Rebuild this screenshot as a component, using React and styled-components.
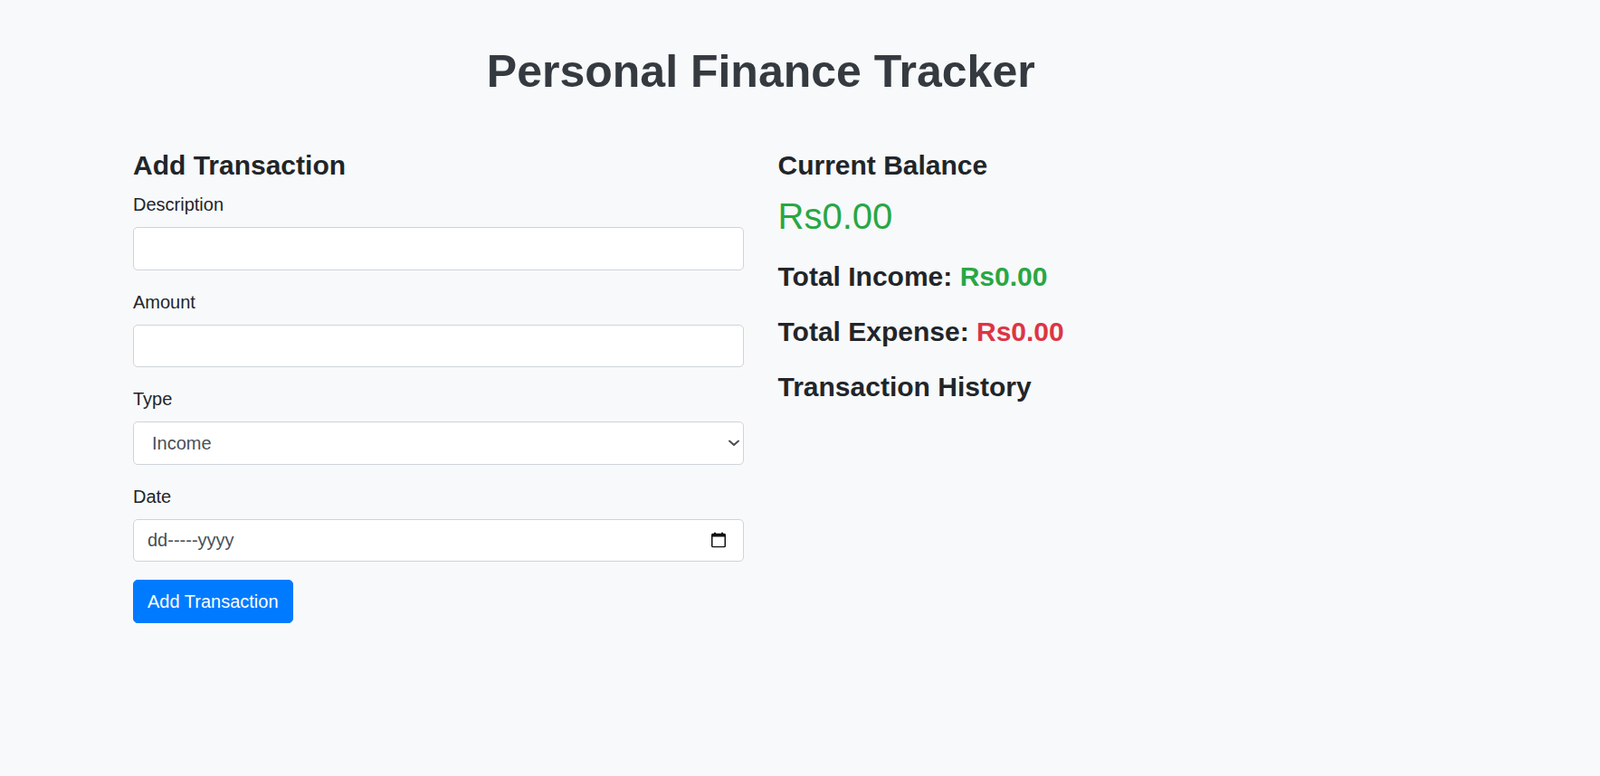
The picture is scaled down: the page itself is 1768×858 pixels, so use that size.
import React from "react";
import styled, { createGlobalStyle } from "styled-components";

const GlobalStyle = createGlobalStyle`
  *, *::before, *::after { box-sizing: border-box; }
  html, body { margin: 0; padding: 0; }
  body {
    background: #f8f9fa;
    color: #212529;
    font-family: "Liberation Sans", Arial, sans-serif;
    font-size: 20px;
    line-height: 1.5;
  }
`;

const Page = styled.div`
  padding: 49px 0 60px;
  min-height: 858px;
`;

const Container = styled.div`
  width: 1387.5px;
  margin-left: 147px;
`;

const Title = styled.h1`
  margin: 0 0 56px;
  font-size: 50px;
  line-height: 60px;
  font-weight: 700;
  text-align: center;
  color: #343a40;
`;

const Columns = styled.div`
  display: grid;
  grid-template-columns: 1fr 1fr;
  column-gap: 37.5px;
  align-items: start;
`;

const Column = styled.div`
  display: flex;
  flex-direction: column;
  align-items: stretch;
`;

const SectionTitle = styled.h4`
  margin: 0 0 ${(p) => p.$mb ?? 10}px;
  font-size: 30px;
  line-height: 36px;
  font-weight: 700;
  color: #212529;
`;

const FormGroup = styled.div`
  margin-bottom: 20px;
`;

const Label = styled.label`
  display: block;
  font-size: 20px;
  line-height: 30px;
  margin-bottom: 10px;
  color: #212529;
`;

const fieldBase = `
  display: block;
  width: 100%;
  height: 47.5px;
  padding: 7.5px 15px;
  font-family: "Liberation Sans", Arial, sans-serif;
  font-size: 20px;
  line-height: 30px;
  color: #495057;
  background: #fff;
  border: 1px solid #ced4da;
  border-radius: 5px;
  outline: none;
`;

const Input = styled.input`
  ${fieldBase}
  &::placeholder { color: #495057; opacity: 1; }
`;

const FieldWrap = styled.div`
  position: relative;
`;

const Select = styled.select`
  ${fieldBase}
  appearance: none;
  -webkit-appearance: none;
  padding-left: 20px;
`;

const FieldIcon = styled.span`
  position: absolute;
  top: 50%;
  right: ${(p) => p.$right}px;
  transform: translateY(-50%);
  display: flex;
  pointer-events: none;
`;

const Button = styled.button`
  align-self: flex-start;
  display: inline-block;
  padding: 7.75px 15px;
  font-family: "Liberation Sans", Arial, sans-serif;
  font-size: 20px;
  line-height: 30px;
  color: #fff;
  background: #007bff;
  border: 1px solid #007bff;
  border-radius: 5px;
  cursor: pointer;
`;

const Balance = styled.div`
  margin: 3.5px 0 25.5px;
  font-size: 40px;
  line-height: 48px;
  font-weight: 400;
  color: #28a745;
`;

const Amount = styled.span`
  color: ${(p) => (p.$negative ? "#dc3545" : "#28a745")};
`;

const Chevron = () => (
  <svg width="12" height="7" viewBox="0 0 12 7" fill="none">
    <path d="M1 1 L6 5.5 L11 1" stroke="#4a4f55" strokeWidth="2" strokeLinecap="round" strokeLinejoin="round" />
  </svg>
);

const CalendarIcon = () => (
  <svg width="16" height="17" viewBox="0 0 16 17" fill="none">
    <rect x="3" y="0" width="2" height="3" fill="#111" />
    <rect x="11" y="0" width="2" height="3" fill="#111" />
    <rect x="0.75" y="2" width="14.5" height="14.25" rx="1" stroke="#111" strokeWidth="1.5" />
    <rect x="0.75" y="2" width="14.5" height="3" fill="#111" />
  </svg>
);

export default function App() {
  return (
    <>
      <GlobalStyle />
      <Page>
        <Container>
          <Title>Personal Finance Tracker</Title>
          <Columns>
            <Column as="form" onSubmit={(e) => e.preventDefault()}>
              <SectionTitle>Add Transaction</SectionTitle>
              <FormGroup>
                <Label htmlFor="desc">Description</Label>
                <Input id="desc" type="text" />
              </FormGroup>
              <FormGroup>
                <Label htmlFor="amount">Amount</Label>
                <Input id="amount" type="number" />
              </FormGroup>
              <FormGroup>
                <Label htmlFor="type">Type</Label>
                <FieldWrap>
                  <Select id="type" defaultValue="income">
                    <option value="income">Income</option>
                    <option value="expense">Expense</option>
                  </Select>
                  <FieldIcon $right={5}>
                    <Chevron />
                  </FieldIcon>
                </FieldWrap>
              </FormGroup>
              <FormGroup>
                <Label htmlFor="date">Date</Label>
                <FieldWrap>
                  <Input id="date" type="text" placeholder="dd-----yyyy" />
                  <FieldIcon $right={20}>
                    <CalendarIcon />
                  </FieldIcon>
                </FieldWrap>
              </FormGroup>
              <Button type="submit">Add Transaction</Button>
            </Column>
            <Column>
              <SectionTitle>Current Balance</SectionTitle>
              <Balance>Rs0.00</Balance>
              <SectionTitle $mb={25}>
                Total Income: <Amount>Rs0.00</Amount>
              </SectionTitle>
              <SectionTitle $mb={25}>
                Total Expense: <Amount $negative>Rs0.00</Amount>
              </SectionTitle>
              <SectionTitle $mb={25}>Transaction History</SectionTitle>
            </Column>
          </Columns>
        </Container>
      </Page>
    </>
  );
}
